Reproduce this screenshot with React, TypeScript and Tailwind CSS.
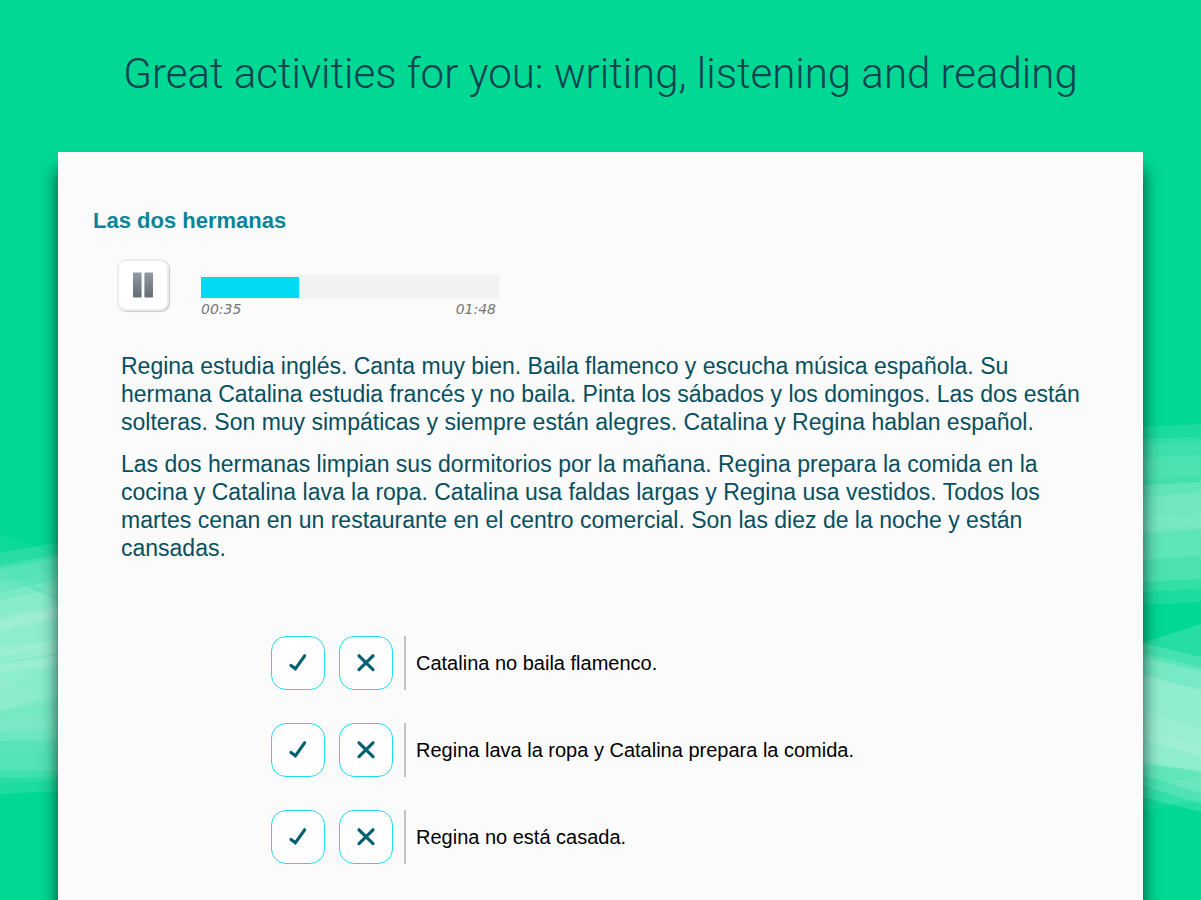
import { useState } from "react";

const statements = [
  "Catalina no baila flamenco.",
  "Regina lava la ropa y Catalina prepara la comida.",
  "Regina no está casada.",
];

function Backdrop() {
  return (
    <svg
      className="absolute inset-0 h-full w-full"
      viewBox="0 0 1201 900"
      preserveAspectRatio="none"
      aria-hidden="true"
    >
      <g fill="#ffffff">
        <g fillOpacity="0.11">
          <path d="M0 553 L60 542 V791 L0 794Z" />
          <path d="M0 533 L60 556 V780 L0 784Z" fillOpacity="0.05" />
          <path d="M0 565 L60 554 V777 L0 778Z" />
          <path d="M0 568 L60 558 V771 L0 770Z" />
          <path d="M0 592 L60 579 V740 L0 741Z" />
          <path d="M0 570 L60 604 V700 L0 712Z" fillOpacity="0.08" />
          <path d="M0 583 L60 570 V728 L0 732Z" fillOpacity="0.06" />
          <path d="M0 600 L60 588 V694 L0 710Z" />
          <path d="M0 618 L60 608 V664 L0 690Z" fillOpacity="0.06" />
          <path d="M0 616 L60 604 V615 L0 630Z" fillOpacity="0.08" />
          <path d="M0 622 L60 606 V618 L0 632Z" fillOpacity="0.08" />
          <path d="M0 647 L60 640 V650 L0 656Z" fillOpacity="0.12" />
          <path d="M0 661 L60 649 V664 L0 673Z" fillOpacity="0.1" />
          <path d="M0 679 L60 700 V752 L0 750Z" fillOpacity="0.05" />
          <path d="M0 720 L60 716 V730 L0 732Z" fillOpacity="0.04" />
        </g>
        <g fillOpacity="0.1">
          <path d="M1142 427 L1201 424 V602 L1142 605Z" />
          <path d="M1142 439 L1201 437 V589 L1142 592Z" />
          <path d="M1142 445 L1201 442 V579 L1142 582Z" fillOpacity="0.06" />
          <path d="M1142 458 L1201 455 V579 L1142 582Z" fillOpacity="0.08" />
          <path d="M1142 485 L1201 482 V556 L1142 560Z" fillOpacity="0.11" />
          <path d="M1142 497 L1201 492 V529 L1142 534Z" fillOpacity="0.11" />
          <path d="M1142 517 L1201 514 V526 L1142 530Z" fillOpacity="0.05" />
        </g>
        <g fill="#00d894" fillOpacity="0.12">
          <path d="M0 662 L60 653 V655 L0 664Z" />
          <path d="M0 575 L60 597 V599 L0 577Z" />
          <path d="M1142 480 L1201 476 V482 L1142 485Z" />
        </g>
        <g fillOpacity="0.15">
          <path d="M1142 643 L1201 624 V812 L1142 797Z" />
          <path d="M1142 643 L1201 657 V804 L1142 785Z" />
          <path d="M1142 653 L1201 668 V793 L1142 775Z" />
          <path d="M1142 658 L1201 671 V773 L1142 760Z" />
          <path d="M1142 675 L1201 690 V770 L1142 765Z" fillOpacity="0.18" />
          <path d="M1142 708 L1201 728 V757 L1142 738Z" fillOpacity="0.08" />
          <path d="M1142 730 L1201 745 V756 L1142 740Z" fillOpacity="0.06" />
          <path d="M1142 812 L1201 799 V775 L1142 790Z" fillOpacity="0.06" />
        </g>
      </g>
    </svg>
  );
}

function PauseIcon() {
  return (
    <svg width="22" height="26" viewBox="0 0 22 26" aria-hidden="true">
      <defs>
        <linearGradient id="pause-fill" x1="0" y1="0" x2="0" y2="1">
          <stop offset="0" stopColor="#929ba1" />
          <stop offset="1" stopColor="#666c75" />
        </linearGradient>
      </defs>
      <rect x="1" y="0.5" width="8.6" height="25" rx="0.8" fill="url(#pause-fill)" />
      <rect x="12.4" y="0.5" width="8.6" height="25" rx="0.8" fill="url(#pause-fill)" />
    </svg>
  );
}

function CheckIcon() {
  return (
    <svg width="20" height="20" viewBox="0 0 20 20" fill="none" stroke="#005f70" strokeWidth="3.2" strokeLinecap="round" strokeLinejoin="miter" aria-hidden="true">
      <path d="M3 12.4 L7.4 15.8 L16.6 2.8" />
    </svg>
  );
}

function CrossIcon() {
  return (
    <svg width="20" height="20" viewBox="0 0 20 20" fill="none" stroke="#005f70" strokeWidth="3.2" strokeLinecap="round" aria-hidden="true">
      <path d="M3 2.8 L17 16.6 M17 2.8 L3 16.6" />
    </svg>
  );
}

function AudioPlayer() {
  const [playing, setPlaying] = useState(true);
  const elapsed = 35;
  const duration = 106;
  return (
    <div className="mt-[23px] ml-6 flex items-start">
      <button
        type="button"
        aria-label="Pausa"
        aria-pressed={playing}
        onClick={() => setPlaying(!playing)}
        className="flex size-[52px] items-center justify-center rounded-[9px] border-2 border-[#ececec] bg-white shadow-[1px_1px_1px_#c9c9c9]"
      >
        <PauseIcon />
      </button>
      <div className="mt-4 ml-8 w-[298px]">
        <div
          role="progressbar"
          aria-label="Audio"
          aria-valuenow={elapsed}
          aria-valuemax={duration}
          className="h-6 bg-[#f2f2f2] pt-0.5 pb-px"
        >
          <div className="h-full bg-[#00daf3]" style={{ width: `${(elapsed / duration) * 100}%` }} />
        </div>
        <div className="flex justify-between pr-[3px] font-['DejaVu_Sans',sans-serif] text-[14px] leading-[20px] text-[#777] italic">
          <span>00:35</span>
          <span>01:48</span>
        </div>
      </div>
    </div>
  );
}

function Statement({ text }: { text: string }) {
  const [answer, setAnswer] = useState<boolean | null>(null);
  const button =
    "flex size-[54px] shrink-0 items-center justify-center rounded-[15px] border border-[#1fdcf0] bg-white";
  return (
    <li className="flex items-center">
      <button type="button" aria-label={`Verdadero: ${text}`} aria-pressed={answer === true} onClick={() => setAnswer(true)} className={button}>
        <CheckIcon />
      </button>
      <button type="button" aria-label={`Falso: ${text}`} aria-pressed={answer === false} onClick={() => setAnswer(false)} className={`${button} ml-3.5`}>
        <CrossIcon />
      </button>
      <p className="ml-[11px] flex min-h-[54px] items-center border-l-2 border-[#c2c2c2] pl-2.5 text-[20px] leading-6 text-black">
        {text}
      </p>
    </li>
  );
}

export default function App() {
  return (
    <div className="relative flex min-h-screen flex-col overflow-hidden bg-[#00d894] font-['Liberation_Sans',Arial,sans-serif]">
      <Backdrop />
      <h1 className="relative px-4 pt-[46px] text-center font-['Roboto',sans-serif] text-[42px] leading-[56px] font-light text-[#0b4450]">
        Great activities for you: writing, listening and reading
      </h1>
      <main className="relative mx-[58px] mt-[50px] grow bg-[#fbfbfb] px-[35px] pt-[54px] pb-9 shadow-[0_18px_16px_0_rgba(0,30,20,0.8)]">
        <h2 className="text-[22px] leading-[30px] font-bold text-[#0a849b]">Las dos hermanas</h2>
        <AudioPlayer />
        <div className="mt-[33px] ml-7 flex flex-col gap-3.5 text-[23px] leading-[28px] text-[#064f60]">
          <p>
            Regina estudia inglés. Canta muy bien. Baila flamenco y escucha música española. Su
            <br />
            hermana Catalina estudia francés y no baila. Pinta los sábados y los domingos. Las dos están
            <br />
            solteras. Son muy simpáticas y siempre están alegres. Catalina y Regina hablan español.
          </p>
          <p>
            Las dos hermanas limpian sus dormitorios por la mañana. Regina prepara la comida en la
            <br />
            cocina y Catalina lava la ropa. Catalina usa faldas largas y Regina usa vestidos. Todos los
            <br />
            martes cenan en un restaurante en el centro comercial. Son las diez de la noche y están
            <br />
            cansadas.
          </p>
        </div>
        <ul className="mt-[74px] ml-[178px] flex flex-col gap-[33px]">
          {statements.map((text) => (
            <Statement key={text} text={text} />
          ))}
        </ul>
      </main>
    </div>
  );
}
